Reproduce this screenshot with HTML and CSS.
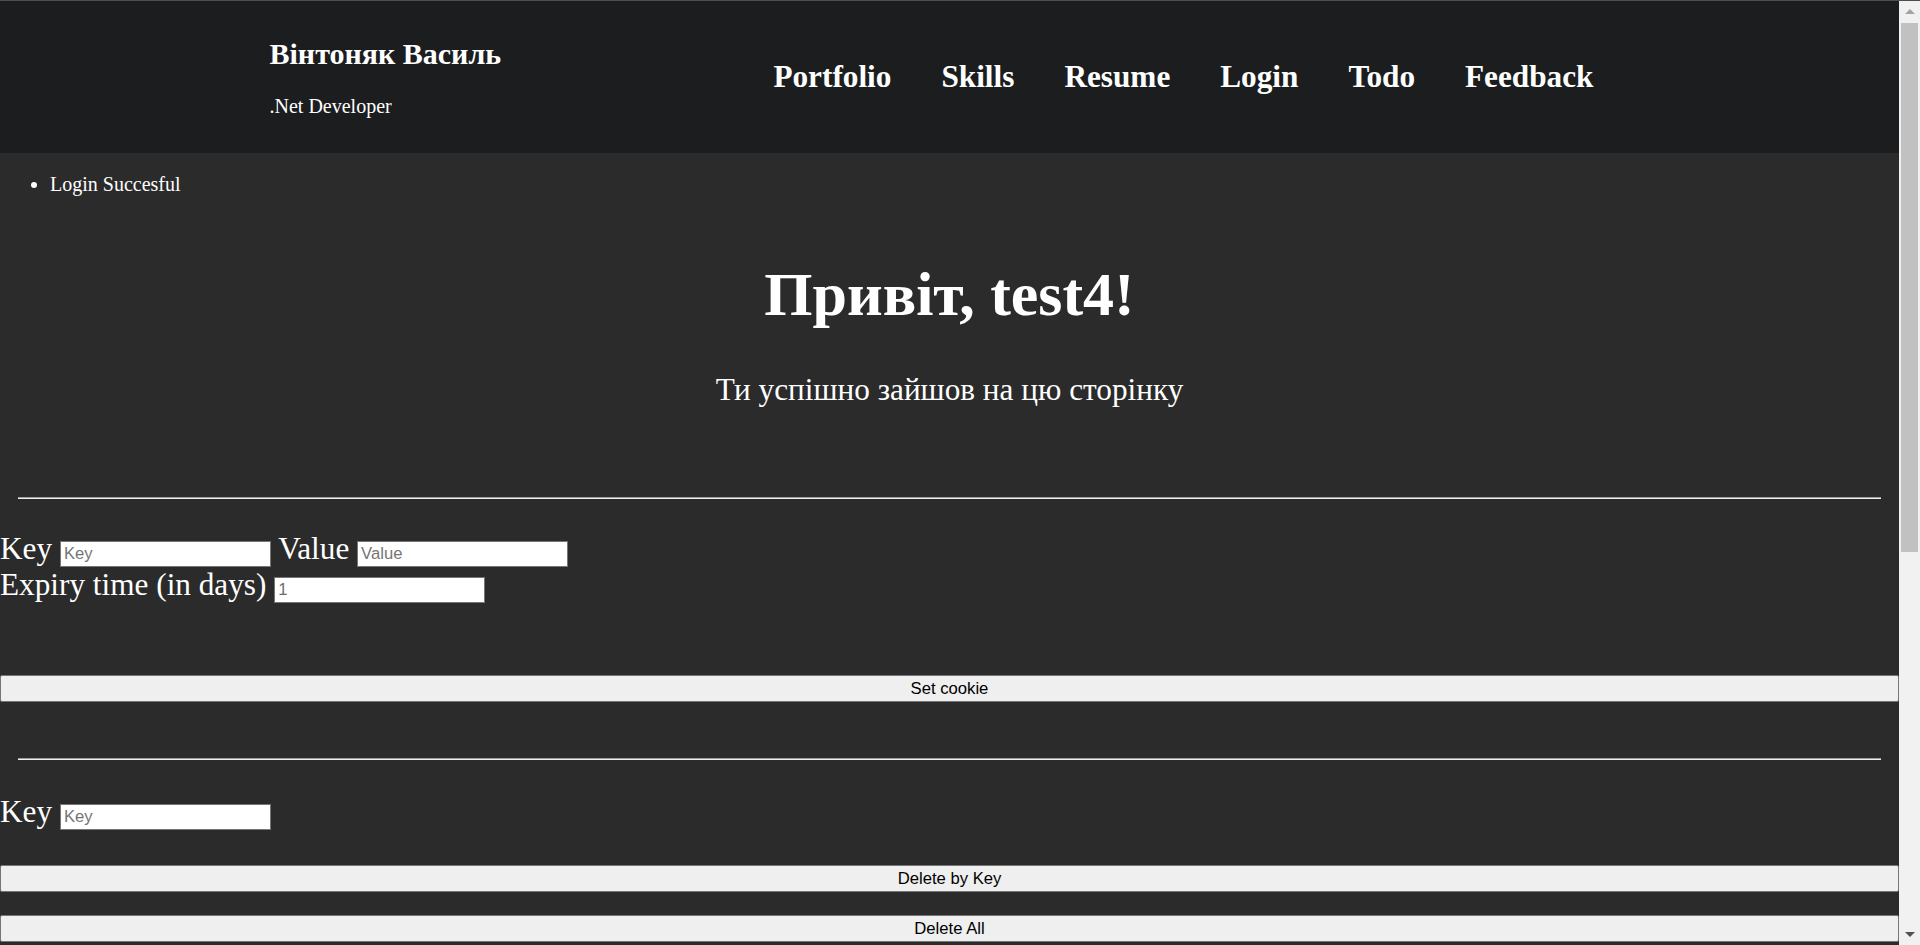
FILE: index.html
```html
<!DOCTYPE html>
<html lang="uk">
<head>
<meta charset="utf-8">
<title>Вінтоняк Василь</title>
<link rel="stylesheet" href="styles.css">
</head>
<body>
<header class="site-header">
  <div class="header-inner">
    <div class="brand">
      <h2 class="brand-name">Вінтоняк Василь</h2>
      <p class="brand-role">.Net Developer</p>
    </div>
    <nav class="main-nav">
      <a href="#">Portfolio</a>
      <a href="#">Skills</a>
      <a href="#">Resume</a>
      <a href="#">Login</a>
      <a href="#">Todo</a>
      <a href="#">Feedback</a>
    </nav>
  </div>
</header>
<main class="content">
  <ul class="messages">
    <li>Login Succesful</li>
  </ul>
  <h1 class="greeting">Привіт, test4!</h1>
  <p class="subtitle">Ти успішно зайшов на цю сторінку</p>

  <hr class="divider divider-first">

  <form class="cookie-form set-form">
    <div class="form-row">
      <label>Key</label> <input class="field" type="text" placeholder="Key"> <label>Value</label> <input class="field" type="text" placeholder="Value"><br>
      <label>Expiry time (in days)</label> <input class="field field-muted" type="text" value="1">
    </div>
    <button class="wide-btn btn-set" type="button">Set cookie</button>
  </form>

  <hr class="divider divider-second">

  <form class="cookie-form delete-form">
    <div class="form-row">
      <label>Key</label> <input class="field" type="text" placeholder="Key">
    </div>
    <button class="wide-btn btn-del-key" type="button">Delete by Key</button>
    <button class="wide-btn btn-del-all" type="button">Delete All</button>
  </form>
</main>
<div class="fake-scrollbar" aria-hidden="true">
  <div class="sb-arrow sb-up"></div>
  <div class="sb-track"><div class="sb-thumb"></div></div>
  <div class="sb-arrow sb-down"></div>
</div>
</body>
</html>
```

FILE: styles.css
```css
html {
  background: #2b2b2b;
}

body {
  margin: 0 21px 0 0;
  min-height: 1613px;
  background: #2b2b2b;
  color: #ffffff;
  font-family: "Liberation Serif", "Times New Roman", serif;
  font-size: 20px;
}

/* Header */
.site-header {
  background: #1c1d1f;
  border-top: 1px solid #4e4e4e;
  height: 152px;
}
.header-inner {
  width: 1360px;
  height: 100%;
  margin: 0 auto;
  display: flex;
  align-items: center;
  justify-content: space-between;
}
.brand {
  display: flex;
  flex-direction: column;
}
.brand-name {
  margin: 0;
  font-size: 30px;
  line-height: 36px;
  font-weight: bold;
}
.brand-role {
  margin: 21.5px 0 0;
  font-size: 20px;
  line-height: 24px;
}
.main-nav {
  display: flex;
  gap: 50px;
  padding-right: 36px;
}
.main-nav a {
  color: #ffffff;
  text-decoration: none;
  font-weight: bold;
  font-size: 31.25px;
  line-height: 36px;
}

/* Content */
.messages {
  margin: 20px 0 0;
  padding-left: 50px;
  font-size: 20px;
  line-height: 23px;
}
.greeting {
  margin: 61px 0 0;
  text-align: center;
  font-size: 62px;
  line-height: 74px;
  font-weight: bold;
}
.subtitle {
  margin: 42px 0 0;
  text-align: center;
  font-size: 31.25px;
  line-height: 34px;
}
.divider {
  height: 0;
  margin: 0 18px;
  border: 0;
  border-top: 1px solid #9d9d9d;
  border-bottom: 1px solid #eeeeee;
}
.divider-first {
  margin-top: 90px;
}
.divider-second {
  margin-top: 56px;
}
.cookie-form {
  margin: 0;
}
.form-row {
  font-size: 31.25px;
  line-height: 36px;
}
.set-form .form-row {
  padding-top: 31.5px;
}
.delete-form .form-row {
  padding-top: 33.5px;
}
.field {
  box-sizing: border-box;
  width: 211px;
  height: 26px;
  margin: 0;
  padding: 1px 3px;
  border: 1px solid #767676;
  border-radius: 0;
  background: #ffffff;
  color: #000000;
  font-family: "Liberation Sans", Arial, sans-serif;
  font-size: 16.67px;
  vertical-align: baseline;
}
.field::placeholder {
  color: #757575;
}
.field-muted {
  color: #6d6d6d;
}
.wide-btn {
  display: block;
  box-sizing: border-box;
  width: 100%;
  height: 27px;
  margin: 0;
  padding: 0;
  border: 1px solid #767676;
  border-radius: 2px;
  background: #efefef;
  color: #000000;
  font-family: "Liberation Sans", Arial, sans-serif;
  font-size: 16.67px;
}
.btn-set {
  margin-top: 72.5px;
}
.btn-del-key {
  margin-top: 35.5px;
}
.btn-del-all {
  margin-top: 23px;
}

/* Window scrollbar imitation (fixed over the right edge) */
.fake-scrollbar {
  position: fixed;
  top: 0;
  right: 0;
  width: 21px;
  height: 100vh;
  box-sizing: border-box;
  border-top: 1px solid #4e4e4e;
  background: #f1f1f1;
  display: flex;
  flex-direction: column;
}
.sb-arrow {
  height: 21px;
  flex: none;
  display: flex;
  align-items: center;
  justify-content: center;
}
.sb-arrow::before {
  content: "";
  width: 0;
  height: 0;
  border-left: 5px solid transparent;
  border-right: 5px solid transparent;
}
.sb-up::before {
  border-bottom: 5px solid #a3a3a3;
}
.sb-down::before {
  border-top: 5px solid #505050;
}
.sb-track {
  flex: 1;
  padding: 1px 2px;
}
.sb-thumb {
  height: 529px;
  background: #c1c1c1;
}
```
